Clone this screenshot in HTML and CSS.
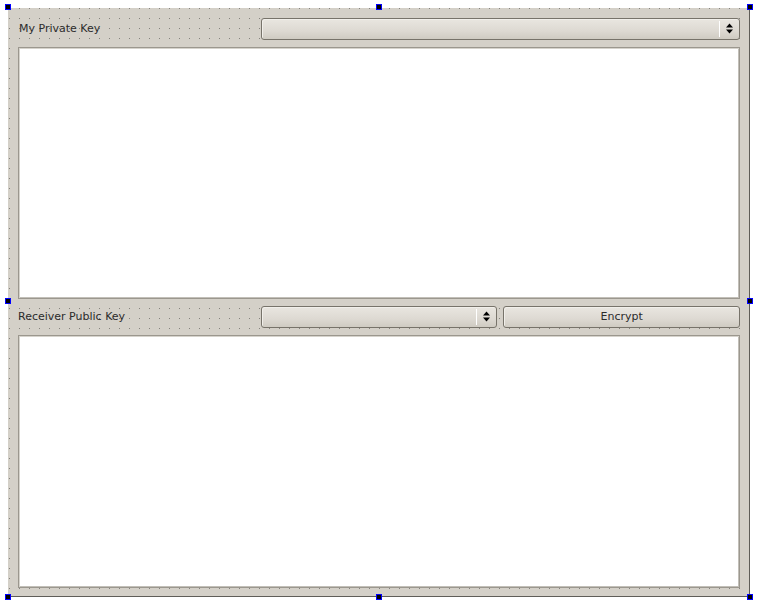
FILE: index.html
```html
<!DOCTYPE html>
<html>
<head>
<meta charset="utf-8">
<title>Encrypt Form</title>
<link rel="stylesheet" href="styles.css">
</head>
<body>
<div class="canvas">
  <div class="form">
    <div class="form-grid">
      <label class="field-label first">My Private Key</label>
      <div class="combo span-2">
        <span class="combo-value"></span>
        <span class="combo-arrow">
          <svg width="7" height="11" viewBox="0 0 7 11"><path d="M0 4.5 L3.5 0.5 L7 4.5 Z M0 6.5 L7 6.5 L3.5 10.5 Z" fill="#000"/></svg>
        </span>
      </div>
      <div class="text-edit span-3"></div>

      <label class="field-label">Receiver Public Key</label>
      <div class="combo">
        <span class="combo-value"></span>
        <span class="combo-arrow">
          <svg width="7" height="11" viewBox="0 0 7 11"><path d="M0 4.5 L3.5 0.5 L7 4.5 Z M0 6.5 L7 6.5 L3.5 10.5 Z" fill="#000"/></svg>
        </span>
      </div>
      <button class="push-button" type="button">Encrypt</button>
      <div class="text-edit span-3"></div>
    </div>
  </div>

  <!-- selection handles around the form -->
  <div class="handle h-tl"></div>
  <div class="handle h-tm"></div>
  <div class="handle h-tr"></div>
  <div class="handle h-ml"></div>
  <div class="handle h-mr"></div>
  <div class="handle h-bl"></div>
  <div class="handle h-bm"></div>
  <div class="handle h-br"></div>
</div>
</body>
</html>
```
FILE: styles.css
```css
html, body {
  background: #ffffff;
}

body {
  margin: 0;
  font-family: "DejaVu Sans", Verdana, sans-serif;
  font-size: 11px;
  color: #2b2b2b;
}

/* white surround that also holds the resize handles */
.canvas {
  position: relative;
  width: 758px;
  height: 604px;
  box-sizing: border-box;
  padding: 8px;
}

/* form canvas with the designer grid of dots */
.form {
  width: 741px;
  height: 588px;
  box-sizing: content-box;
  border-right: 1px solid #5f5d58;
  border-bottom: 1px solid #5f5d58;
  background-color: #d4d0c8;
  background-image: conic-gradient(from 270deg at 1px 1px, #85837e 90deg, transparent 0);
  background-size: 10px 10px;
  background-position: 1px 0;
}

.form-grid {
  box-sizing: border-box;
  height: 100%;
  padding: 10px 9px 8px 10px;
  display: grid;
  grid-template-columns: 1fr 1fr 1fr;
  grid-template-rows: 22px 252px 22px 1fr;
  column-gap: 6px;
  row-gap: 7px;
}

.span-2 { grid-column: span 2; }
.span-3 { grid-column: span 3; }

.field-label {
  display: flex;
  align-items: center;
  padding-bottom: 1px;
  white-space: nowrap;
}

.field-label.first {
  padding-left: 1px;
}

/* combo box */
.combo {
  box-sizing: border-box;
  display: flex;
  border: 1px solid #77736a;
  border-radius: 3px;
  background: linear-gradient(#e9e6e0, #ddd9d2 60%, #cfcbc2);
  box-shadow: inset 1px 1px 0 #f1efea;
}

.combo-value {
  flex: 1;
}

.combo-arrow {
  width: 19px;
  display: flex;
  align-items: center;
  justify-content: center;
  border-left: 1px solid #ffffff;
  margin: 2px 0;
}

.combo-arrow svg {
  display: block;
  margin-top: -1px;
}

/* push button */
.push-button {
  box-sizing: border-box;
  margin: 0;
  padding: 0 0 1px;
  font: inherit;
  color: #2b2b2b;
  border: 1px solid #77736a;
  border-radius: 3px;
  background: linear-gradient(#e9e6e0, #ddd9d2 60%, #cfcbc2);
  box-shadow: inset 1px 1px 0 #f1efea;
}

/* text edits */
.text-edit {
  box-sizing: border-box;
  background: #ffffff;
  border: 1px solid #9b978e;
  box-shadow: inset 1px 1px 0 #d6d3cc, inset -1px -1px 0 #c2bfb8;
}

/* selection handles */
.handle {
  position: absolute;
  z-index: 2;
  width: 6px;
  height: 6px;
  box-sizing: border-box;
  background: #000000;
  border: 1px solid #0000ff;
}

.h-tl { left: 5px;   top: 4px; }
.h-tm { left: 376px; top: 4px; }
.h-tr { left: 747px; top: 4px; }
.h-ml { left: 5px;   top: 298px; }
.h-mr { left: 747px; top: 298px; }
.h-bl { left: 5px;   top: 594px; }
.h-bm { left: 376px; top: 594px; }
.h-br { left: 747px; top: 594px; }
```
